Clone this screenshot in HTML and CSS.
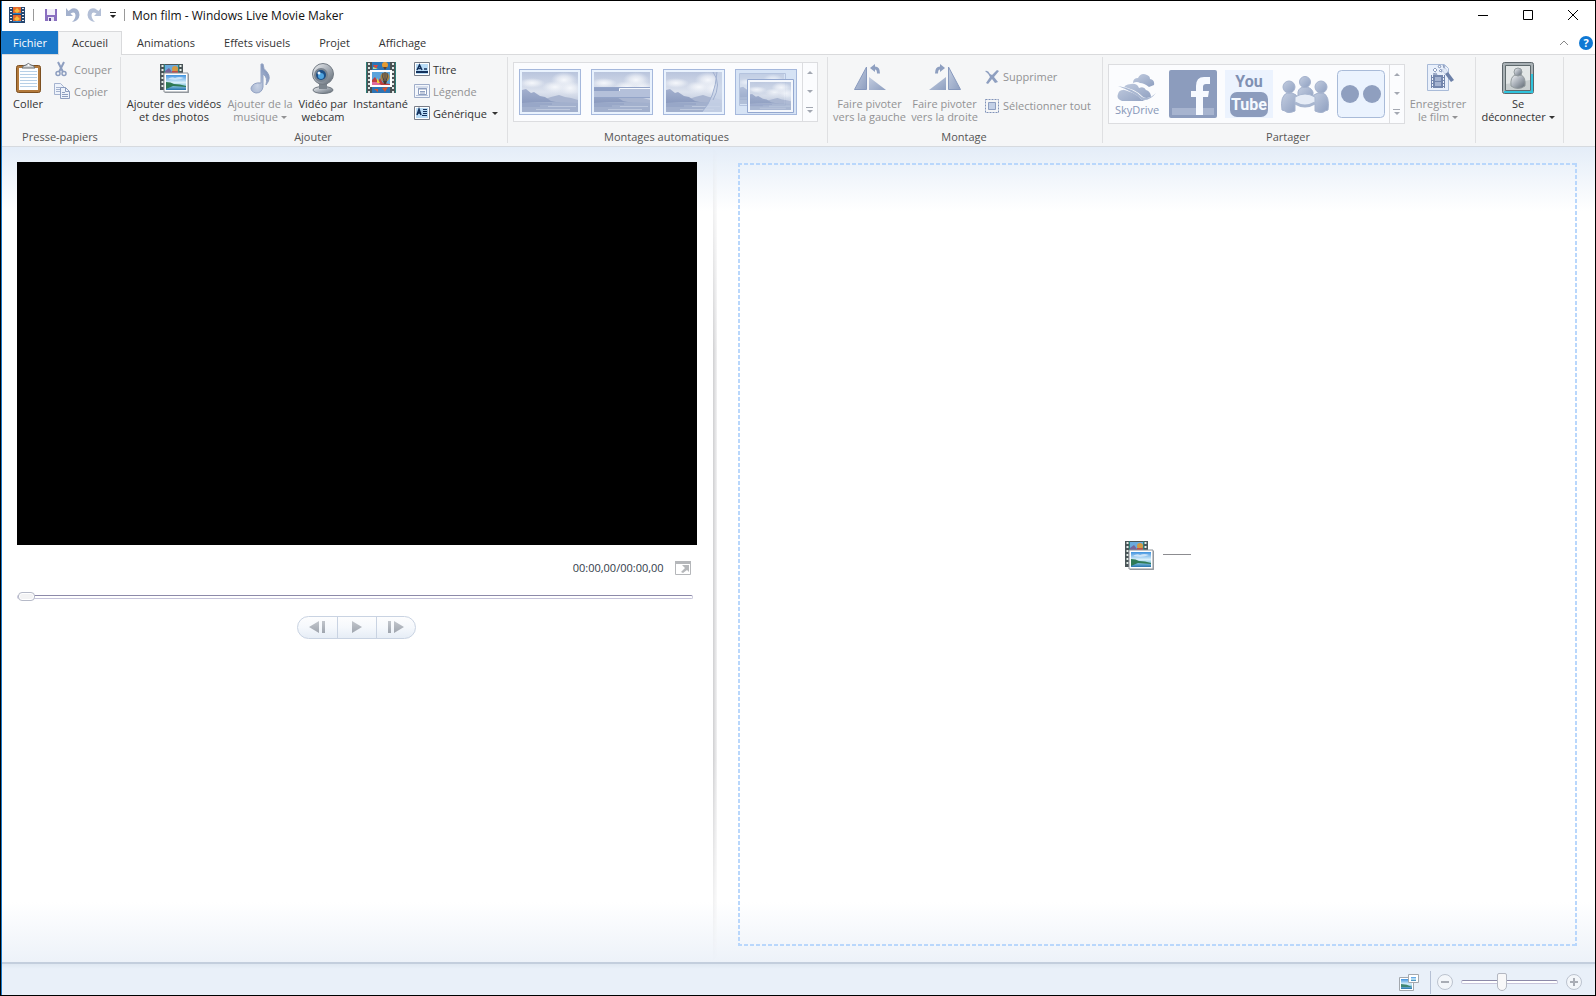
FILE: index.html
```html
<!DOCTYPE html>
<html lang="fr">
<head>
    <meta charset="UTF-8">
    <meta name="viewport" content="width=device-width, initial-scale=1.0">
    <title>Mon film - Windows Live Movie Maker</title>
    <link rel="stylesheet" href="styles.css">
</head>
<body>

<!-- Shared drawings -->
<svg class="defs" width="0" height="0" aria-hidden="true">
    <defs>
        <linearGradient id="sky" x1="0" y1="0" x2="0" y2="1">
            <stop offset="0" stop-color="#3f93e0"/>
            <stop offset="0.5" stop-color="#d8effa"/>
            <stop offset="0.7" stop-color="#8cc9e0"/>
            <stop offset="1" stop-color="#2673ae"/>
        </linearGradient>
        <linearGradient id="pale" x1="0" y1="0" x2="0" y2="1">
            <stop offset="0" stop-color="#b9c5dd"/>
            <stop offset="0.5" stop-color="#dde3ee"/>
            <stop offset="1" stop-color="#a3b1cd"/>
        </linearGradient>
        <radialGradient id="cloud">
            <stop offset="0" stop-color="#f6f8fc"/>
            <stop offset="0.5" stop-color="#eef1f7" stop-opacity="0.7"/>
            <stop offset="1" stop-color="#e6ebf4" stop-opacity="0"/>
        </radialGradient>
        <linearGradient id="hill" x1="0" y1="0" x2="0" y2="1">
            <stop offset="0" stop-color="#a3b0ce"/>
            <stop offset="1" stop-color="#8797bc"/>
        </linearGradient>
        <linearGradient id="slate" x1="0" y1="0" x2="1" y2="1">
            <stop offset="0" stop-color="#c3cde0"/>
            <stop offset="1" stop-color="#8e9fc0"/>
        </linearGradient>
        <linearGradient id="steel" x1="0" y1="0" x2="1" y2="1">
            <stop offset="0" stop-color="#f4f6f8"/>
            <stop offset="0.5" stop-color="#a6adb6"/>
            <stop offset="1" stop-color="#5c6670"/>
        </linearGradient>
        <linearGradient id="play" x1="0" y1="0" x2="0" y2="1">
            <stop offset="0" stop-color="#c2c6cc"/>
            <stop offset="1" stop-color="#9fa5ae"/>
        </linearGradient>
        <symbol id="media" viewBox="0 0 32 32">
            <path d="M2 2h23v26H2z" fill="#4a5558"/>
            <path d="M7 3h13v10H7z" fill="#6aaadd"/>
            <path d="M7 9l4-3 3 4 6-2v5H7z" fill="#76659a"/>
            <circle cx="17" cy="7" r="3" fill="#d59a42"/>
            <path d="M14 9h6v2h-6z" fill="#c04e4a"/>
            <path d="M4.500 3v24M22.500 3v9" stroke="#e6efe9" stroke-width="2" stroke-dasharray="2 2"/>
            <path d="M6.500 2v26M20.500 2v10" stroke="#2d7f78" stroke-width="1"/>
            <path d="M7 12h24v19H7z" fill="#9aa0a6"/>
            <path d="M6 11h24v19H6z" fill="#fff" stroke="#8b9096"/>
            <path d="M8 13h20v15H8z" fill="url(#sky)"/>
            <path d="M10 17q4-3 7-1 4-2 9 0-6 3-16 1z" fill="#fff" opacity=".6"/>
            <path d="M8 20q5 0 8 2 6 0 12 2v1l-13-1-7 3z" fill="#2f7a55"/>
        </symbol>
        <symbol id="landscape" viewBox="0 0 56 40">
            <path d="M0 0h56v40H0z" fill="url(#pale)"/>
            <ellipse cx="42" cy="8" rx="13" ry="8" fill="url(#cloud)"/>
            <ellipse cx="33" cy="15" rx="13" ry="6" fill="url(#cloud)"/>
            <ellipse cx="48" cy="16" rx="11" ry="7" fill="url(#cloud)"/>
            <ellipse cx="10" cy="11" rx="13" ry="5" fill="url(#cloud)"/>
            <path d="M20 28l9-3 8-2 6 2 6 1 7 2v5H20z" fill="#a9b5d0"/>
            <path d="M0 18l4-1 5 4 3-1 6 4 5 1 6 4 10 2v2H0z" fill="url(#hill)"/>
            <path d="M0 31q28-2 56 0v9H0z" fill="#a2b0cd"/>
            <path d="M0 32h30M0 34h18" stroke="#8e9ec2"/>
            <path d="M26 34.500h28M14 37.500h34" stroke="#bdc8dd"/>
        </symbol>
    </defs>
</svg>

<div class="window">

<header class="titlebar">
    <div class="quick">
        <svg class="app" width="16" height="16" viewBox="0 0 16 16">
            <path d="M0 0h16v16H0z" fill="#26466f"/>
            <path d="M4 0h8v7H4z" fill="#e3672c"/>
            <path d="M4 8h8v7H4z" fill="#e3672c"/>
            <path d="M5 4l3-3 3 3-3 2zM5 12l3-3 3 3-3 2z" fill="#f6b93b"/>
            <path d="M4 6h8v1H4zM4 14h8v1H4z" fill="#2b7fc6"/>
            <path d="M2 1v14M14 1v14" stroke="#e8eef5" stroke-width="2" stroke-dasharray="1 2"/>
        </svg>
        <span class="bar"></span>
        <button aria-label="Enregistrer"><svg width="14" height="14" viewBox="0 0 14 14">
            <path d="M1 1h12v12H1z" fill="#8a6fc0"/>
            <path d="M3 1h8v6H3z" fill="#f3f0fa"/>
            <path d="M4 9h6v4H4z" fill="#e9e4f5"/>
            <path d="M5 10h2v3H5z" fill="#5d4795"/>
        </svg></button>
        <button aria-label="Annuler"><svg width="15" height="16" viewBox="0 0 15 16">
            <path d="M1 1v8h7L5.500 6.500Q10 4 10.500 8q0 4-3.500 7 7-1 7.500-7Q14 0 7 1.500L3.500 4z" fill="#a3b1cd"/>
        </svg></button>
        <button aria-label="Rétablir"><svg width="15" height="16" viewBox="0 0 15 16">
            <path d="M14 1v8H7l2.500-2.500Q5 4 4.500 8q0 4 3.500 7-7-1-7.500-7Q1 0 8 1.500L11.500 4z" fill="#b3bfd6"/>
        </svg></button>
        <button aria-label="Personnaliser"><svg width="8" height="7" viewBox="0 0 8 7">
            <path d="M1 0h6v1H1zM1 3h6L4 6z" fill="#222"/>
        </svg></button>
        <span class="bar"></span>
    </div>
    <h1>Mon film - Windows Live Movie Maker</h1>
    <div class="caption">
        <button aria-label="Réduire"><svg width="12" height="12" viewBox="0 0 12 12"><path d="M1 6.500h10" stroke="#000"/></svg></button>
        <button aria-label="Agrandir"><svg width="12" height="12" viewBox="0 0 12 12"><path d="M1.500 1.500h9v9h-9z" fill="none" stroke="#000"/></svg></button>
        <button aria-label="Fermer"><svg width="12" height="12" viewBox="0 0 12 12"><path d="M1 1l10 10M11 1L1 11" stroke="#000"/></svg></button>
    </div>
</header>

<nav class="tabs">
    <button class="file">Fichier</button>
    <button class="active">Accueil</button>
    <button>Animations</button>
    <button>Effets visuels</button>
    <button>Projet</button>
    <button>Affichage</button>
    <div class="help">
        <button aria-label="Réduire le ruban"><svg width="10" height="6" viewBox="0 0 10 6"><path d="M1 5l4-4 4 4" fill="none" stroke="#888"/></svg></button>
        <button class="question" aria-label="Aide">?</button>
    </div>
</nav>

<div class="ribbon">
    <section class="group clipboard">
        <div class="tools">
            <button class="big">
                <svg width="32" height="32" viewBox="0 0 32 32">
                    <rect x="4.500" y="3.500" width="24" height="27" rx="2" fill="#b37a3c" stroke="#7d5020"/>
                    <path d="M7 6h19v22H7z" fill="#fdfeff"/>
                    <path d="M8 9.500h17M8 12.500h17M8 15.500h17M8 18.500h17M8 21.500h17M8 24.500h17" stroke="#b6cfe6"/>
                    <path d="M10 6q1-3 4-3 2-3 5 0 3 0 4 3z" fill="#d5d8da" stroke="#64696d"/>
                    <circle cx="16.500" cy="3" r="1" fill="#fff"/>
                </svg>
                <span>Coller</span>
            </button>
            <div class="stack">
                <button class="small" disabled>
                    <svg width="14" height="16" viewBox="0 0 14 16">
                        <path d="M4 1l5 10M10 1L5 11" stroke="#8e9fc0" stroke-width="2"/>
                        <circle cx="4" cy="12.500" r="2" fill="none" stroke="#8e9fc0" stroke-width="1.500"/>
                        <circle cx="10" cy="12.500" r="2" fill="none" stroke="#8e9fc0" stroke-width="1.500"/>
                    </svg>
                    Couper
                </button>
                <button class="small" disabled>
                    <svg width="16" height="16" viewBox="0 0 16 16">
                        <path d="M.5.500h6l3 3v8h-9z" fill="#eef3fb" stroke="#a5b3cf"/>
                        <path d="M2 4.500h4M2 6.500h4M2 8.500h4" stroke="#a5b3cf"/>
                        <path d="M6.500 4.500h5l4 4v7h-9z" fill="#eef3fb" stroke="#8e9fc0"/>
                        <path d="M11.500 4.500v4h4M8 9.500h3M8 11.500h6M8 13.500h6" fill="none" stroke="#8e9fc0"/>
                    </svg>
                    Copier
                </button>
            </div>
        </div>
        <h2>Presse-papiers</h2>
    </section>

    <section class="group add">
        <div class="tools">
            <button class="big">
                <svg width="32" height="32"><use href="#media"/></svg>
                <span>Ajouter des vidéos<br>et des photos</span>
            </button>
            <button class="big" disabled>
                <svg width="32" height="32" viewBox="0 0 32 32">
                    <defs>
                        <radialGradient id="note" cx=".35" cy=".75" r=".7">
                            <stop offset="0" stop-color="#c9d3e5"/>
                            <stop offset="1" stop-color="#8799bd"/>
                        </radialGradient>
                    </defs>
                    <path d="M17 2h2q0 5 4 8 5 6-1 13 2-8-3-11v13q-1 6-7 6-5-1-5-5 2-6 10-5z" fill="url(#note)" stroke="#93a3c3"/>
                </svg>
                <span>Ajouter de la<br>musique <i class="arrow"></i></span>
            </button>
            <button class="big">
                <svg width="32" height="32" viewBox="0 0 32 32">
                    <ellipse cx="16" cy="28" rx="10" ry="3.500" fill="url(#steel)" stroke="#6e767f"/>
                    <path d="M12 20h8v7h-8z" fill="#7c858e"/>
                    <circle cx="16" cy="12" r="10.500" fill="url(#steel)" stroke="#737b84"/>
                    <circle cx="14" cy="13" r="7" fill="#7b8590"/>
                    <circle cx="14" cy="13" r="5" fill="#1d4f86"/>
                    <circle cx="14" cy="14" r="3" fill="#4fa4e0"/>
                    <circle cx="12" cy="11" r="1.500" fill="#e8f4ff"/>
                </svg>
                <span>Vidéo par<br>webcam</span>
            </button>
            <button class="big">
                <svg width="32" height="32" viewBox="0 0 32 32">
                    <path d="M1 0h30v31H1z" fill="#4b5254"/>
                    <path d="M7 0h18v31H7z" fill="#2c74b5"/>
                    <path d="M4 1v30M28 1v30" stroke="#dfe6e4" stroke-width="2" stroke-dasharray="2 2"/>
                    <path d="M1.500 0v31M30.500 0v31" stroke="#2d7f78"/>
                    <circle cx="20" cy="3" r="3" fill="#e39a33"/>
                    <path d="M18 5h4l-2 3z" fill="#5a3f2c"/>
                    <path d="M8 3h5l-2 4z" fill="#d9493d"/>
                    <path d="M8 5l5 2h-5z" fill="#bfe08a"/>
                    <path d="M17 26l6-1-3 5zM9 27h4v3z" fill="#d4532f"/>
                    <path d="M6 9h20v15H6z" fill="#5aa4db" stroke="#fff" stroke-width="2"/>
                    <path d="M7 18l3-3 3 5 2-4 3 5 7 1v1H7z" fill="#bd3f3d"/>
                    <path d="M7 20h6l3 3H7z" fill="#e06a9a"/>
                    <path d="M12 16l3 5h-3z" fill="#f0cf3c"/>
                    <circle cx="20" cy="15" r="4.500" fill="#a9843c"/>
                    <path d="M18 11q-1 4 1 8M22 11q1 4-1 8M20 10v10" stroke="#3a3e54" fill="none"/>
                    <path d="M18 19h4l-1 3h-2z" fill="#4b3929"/>
                </svg>
                <span>Instantané</span>
            </button>
            <div class="stack">
                <button class="small">
                    <svg width="16" height="14" viewBox="0 0 16 14">
                        <path d="M.5.500h15v13H.5z" fill="#fff" stroke="#777d88"/>
                        <path d="M2 2h12v10H2z" fill="#b9dcf7"/>
                        <path d="M3 8l2.500-5L8 8M4 6.500h3M10 7h3" fill="none" stroke="#13315c" stroke-width="1.500"/>
                        <path d="M2 9h12v2H2z" fill="#13315c"/>
                    </svg>
                    Titre
                </button>
                <button class="small" disabled>
                    <svg width="16" height="14" viewBox="0 0 16 14">
                        <path d="M.5.500h15v13H.5z" fill="#f4f7fc" stroke="#9fadc9"/>
                        <path d="M2 3h12M2 11.500h12" stroke="#b5c2da"/>
                        <path d="M4.500 4.500h8v6h-8z" fill="#fff" stroke="#8e9fc0"/>
                        <path d="M4 5h9M6 7.500h5M6 9h5" stroke="#8e9fc0"/>
                    </svg>
                    Légende
                </button>
                <button class="small">
                    <svg width="16" height="14" viewBox="0 0 16 14">
                        <path d="M.5.500h15v13H.5z" fill="#fff" stroke="#777d88"/>
                        <path d="M2 2h12v10H2z" fill="#b9dcf7"/>
                        <path d="M3 9l2-6 2 6M4 7h2" fill="none" stroke="#13315c" stroke-width="1.500"/>
                        <path d="M9 3.500h4M9 5.500h4M9 7.500h4M8 9.500h5" stroke="#13315c"/>
                    </svg>
                    Générique <i class="arrow"></i>
                </button>
            </div>
        </div>
        <h2>Ajouter</h2>
    </section>

    <section class="group themes">
        <div class="gallery">
            <div class="items">
                <button class="thumb" aria-label="Aucun thème"><svg width="56" height="40"><use href="#landscape"/></svg></button>
                <button class="thumb" aria-label="Contemporain"><svg width="56" height="40" viewBox="0 0 56 40">
                    <use href="#landscape"/>
                    <path d="M0 15h56v10H0z" fill="#b4c0da"/>
                    <path d="M0 15h25v4H0z" fill="#8fa0c5"/>
                    <path d="M25.500 19V16.500H56" fill="none" stroke="#f5f8fd"/>
                    <path d="M0 15.500h56M0 25.500h56" stroke="#93a4c8"/>
                </svg></button>
                <button class="thumb" aria-label="Cinématique"><svg width="56" height="40" viewBox="0 0 56 40">
                    <use href="#landscape"/>
                    <path d="M51 0q-2 26-15 40h20V0z" fill="#c9d4e8" opacity=".8"/>
                    <path d="M51 0q-2 26-15 40M47 0q9 12 0 28" fill="none" stroke="#a0b0d0"/>
                </svg></button>
                <button class="thumb" aria-label="Fondu"><svg width="60" height="44" viewBox="0 0 60 44">
                    <path d="M0 0h60v44H0z" fill="#d6e3f5"/>
                    <svg x="4" y="4" width="44" height="30" viewBox="0 0 56 40" preserveAspectRatio="none" opacity=".7"><use href="#landscape"/></svg>
                    <path d="M3.500 3.500h46v32h-46z" fill="none" stroke="#b4c3de"/>
                    <svg x="13" y="12" width="43" height="28" viewBox="0 0 56 40" preserveAspectRatio="none" opacity=".85"><use href="#landscape"/></svg>
                    <path d="M13 11h43v30H13z" fill="none" stroke="#f5f8fd" stroke-width="2"/>
                    <path d="M11.500 9.500h46v33h-46z" fill="none" stroke="#94a8d0"/>
                </svg></button>
            </div>
            <div class="scroll">
                <button aria-label="Haut"><i class="up"></i></button>
                <button aria-label="Bas"><i class="arrow"></i></button>
                <button aria-label="Plus"><i class="arrow more"></i></button>
            </div>
        </div>
        <h2>Montages automatiques</h2>
    </section>

    <section class="group edit">
        <div class="tools">
            <button class="big" disabled>
                <svg width="32" height="32" viewBox="0 0 32 32">
                    <path d="M12.500 5v22.500H.5z" fill="url(#slate)" stroke="#8799bd"/>
                    <path d="M15 15v13h17z" fill="url(#slate)"/>
                    <path d="M16 6l5-4v2.500q5 0 5 7h-3q0-4-2-4V10z" fill="#8e9fc0"/>
                </svg>
                <span>Faire pivoter<br>vers la gauche</span>
            </button>
            <button class="big" disabled>
                <svg width="32" height="32" viewBox="0 0 32 32">
                    <path d="M19.500 5v22.500h12z" fill="url(#slate)" stroke="#8799bd"/>
                    <path d="M17 15v13H0z" fill="url(#slate)"/>
                    <path d="M16 6l-5-4v2.500q-5 0-5 7h3q0-4 2-4V10z" fill="#8e9fc0"/>
                </svg>
                <span>Faire pivoter<br>vers la droite</span>
            </button>
            <div class="stack tall">
                <button class="small" disabled>
                    <svg width="16" height="16" viewBox="0 0 16 16">
                        <path d="M1 2q3-1 5 3l2 1 5-5 2 1-5 6 4 5-3 1-3-4-4 5-2-1 4-6q-2-4-5-6z" fill="#8e9fc0"/>
                    </svg>
                    Supprimer
                </button>
                <button class="small" disabled>
                    <svg width="16" height="16" viewBox="0 0 16 16">
                        <path d="M1.500 1.500h13v13h-13z" fill="none" stroke="#8093b8" stroke-dasharray="2 1"/>
                        <path d="M4.500 4.500h7v7h-7z" fill="#c3d0e6" stroke="#8e9fc0"/>
                    </svg>
                    Sélectionner tout
                </button>
            </div>
        </div>
        <h2>Montage</h2>
    </section>

    <section class="group share">
        <div class="tools">
            <div class="gallery">
                <div class="items">
                    <button class="site sky" aria-label="SkyDrive">
                        <svg width="40" height="30" viewBox="0 0 40 30">
                            <path d="M16 10q0-5 5-5 3-6 9-3 3 1 3 4 5 1 4 6l-5 2q-5-4-9-4-3-2-7 0z" fill="url(#slate)"/>
                            <path d="M5 28q-6-2-4-7 1-4 5-4 1-6 8-6 6-1 8 4 5-2 7 2 4 1 5 6-1 5-6 5z" fill="url(#slate)"/>
                            <path d="M1 14q17 3 24 11 6 4 13-2" fill="none" stroke="#fbfcfe" stroke-width="3"/>
                            <path d="M1 13q17 3 24 11 7 3 14-4-6 8-14 7-8-8-24-14z" fill="#a9b7d1"/>
                        </svg>
                        <span>SkyDrive</span>
                    </button>
                    <button class="site" aria-label="Facebook"><svg width="48" height="48" viewBox="0 0 48 48">
                        <rect width="48" height="48" rx="2" fill="#8c9cbd"/>
                        <path d="M3 38h42v7H3z" fill="#a7b4cf"/>
                        <path d="M27 45V27h-5v-6h5v-5q0-9 8-9h6v7h-4q-3 0-3 3v4h6l-1 6h-5v18z" fill="#f7faff"/>
                    </svg></button>
                    <button class="site youtube"><b>You</b><em>Tube</em></button>
                    <button class="site" aria-label="Windows Live Groupes"><svg width="48" height="48" viewBox="0 0 48 48">
                        <g fill="url(#slate)" stroke="#a4b2cd">
                            <path d="M17 32V22q1-5 7-5t8 5v10z"/>
                            <circle cx="24" cy="12" r="5.500"/>
                            <path d="M1 40q-2-14 5-17h5q5 1 6 6v3l-3 2v7q-7 3-10 0z"/>
                            <circle cx="8" cy="17" r="6"/>
                            <path d="M47 40q2-14-5-17h-5q-5 1-6 6v3l3 2v7q7 3 10 0z"/>
                            <circle cx="40" cy="17" r="6"/>
                        </g>
                        <path d="M14 27q10-6 20 0v6q-10 6-20 0z" fill="#e6ecf6" stroke="#a9b7d0"/>
                        <path d="M14 33q10 6 20 0" fill="none" stroke="#a9b7d0" stroke-width="3"/>
                    </svg></button>
                    <button class="site" aria-label="Flickr"><svg width="48" height="48" viewBox="0 0 48 48">
                        <rect x=".5" y=".5" width="47" height="47" rx="4" fill="#ebf3fe" stroke="#a9bbd8"/>
                        <circle cx="13" cy="24" r="9" fill="#8f9fbf"/>
                        <circle cx="35" cy="24" r="9" fill="#8f9fbf"/>
                    </svg></button>
                </div>
                <div class="scroll">
                    <button aria-label="Haut"><i class="up"></i></button>
                    <button aria-label="Bas"><i class="arrow"></i></button>
                    <button aria-label="Plus"><i class="arrow more"></i></button>
                </div>
            </div>
            <button class="big" disabled>
                <svg width="32" height="32" viewBox="0 0 32 32">
                    <path d="M5.500 2.500h17l4 4v22h-21z" fill="#e9f0fb" stroke="#a9bbd8"/>
                    <path d="M9 13h14v13H9z" fill="#7386ad"/>
                    <path d="M10.500 13v13M21.500 13v13" stroke="#eef3fb" stroke-dasharray="2 1"/>
                    <path d="M13 15h6v4h-6zM13 20h6v4h-6z" fill="#a3b2d0"/>
                    <path d="M20 8l3-2 9 12-3 2z" fill="#6c80a8"/>
                    <path d="M20 8l3-2 3 4-3 2z" fill="#dfe8f6"/>
                    <path d="M11 8l2-2 2 2-2 2zM16 4l2-1 1 2-2 1zM17 9l2-2 1 3zM11 12l3-1 1 2zM21 3l2 1-1 2z" fill="#fff" stroke="#8e9fc0"/>
                </svg>
                <span>Enregistrer<br>le film <i class="arrow"></i></span>
            </button>
        </div>
        <h2>Partager</h2>
    </section>

    <section class="group account">
        <div class="tools">
            <button class="big">
                <svg width="32" height="32" viewBox="0 0 32 32">
                    <rect x=".5" y=".5" width="31" height="31" rx="2" fill="#a9b1b5" stroke="#5d666b"/>
                    <path d="M2 30h28V12" fill="none" stroke="#2fc3dc" stroke-width="2"/>
                    <path d="M3.500 3.500h25v25h-25z" fill="#c9cfd0" stroke="#5f6a6d"/>
                    <path d="M4 4h24v14L4 22z" fill="#e3e7e7"/>
                    <path d="M9 24q-1-9 4-11h6q5 2 4 11-7 5-14 0z" fill="url(#steel)" stroke="#949c9f"/>
                    <circle cx="16" cy="10" r="4" fill="url(#steel)" stroke="#949c9f"/>
                </svg>
                <span>Se<br>déconnecter <i class="arrow"></i></span>
            </button>
        </div>
    </section>
</div>

<main>
    <section class="preview">
        <div class="video"></div>
        <div class="time">
            <span>00:00,00/00:00,00</span>
            <button aria-label="Plein écran"><svg width="16" height="14" viewBox="0 0 16 14">
                <path d="M.5.500h15v13H.5z" fill="#fff" stroke="#b5b7ba"/>
                <path d="M0 0h16v3H0z" fill="#b5b7ba"/>
                <path d="M7 4h7v7l-2-2-4 3-2-1 4-4z" fill="#b5b7ba"/>
            </svg></button>
        </div>
        <input class="seek" type="range" min="0" max="100" value="0" aria-label="Position">
        <div class="controls">
            <button aria-label="Image précédente"><svg width="16" height="12" viewBox="0 0 16 12"><path d="M10 0v12L0 6zM13 0h3v12h-3z" fill="url(#play)"/></svg></button>
            <button aria-label="Lecture"><svg width="10" height="12" viewBox="0 0 10 12"><path d="M0 0l10 6-10 6z" fill="url(#play)"/></svg></button>
            <button aria-label="Image suivante"><svg width="16" height="12" viewBox="0 0 16 12"><path d="M6 0v12l10-6zM0 0h3v12H0z" fill="url(#play)"/></svg></button>
        </div>
    </section>
    <div class="splitter"></div>
    <section class="storyboard">
        <div class="dropzone">
            <svg width="32" height="32"><use href="#media"/></svg>
            <hr>
        </div>
    </section>
</main>

<footer>
    <button aria-label="Taille des miniatures"><svg width="20" height="17" viewBox="0 0 20 17">
        <path d="M.5 3.500h14v13H.5z" fill="#fff" stroke="#a3a8ae"/>
        <path d="M2 5h11v10H2z" fill="url(#sky)"/>
        <path d="M2 10q6 0 11 3H2z" fill="#3f8672"/>
        <path d="M9.500.500h10v8h-10z" fill="#fff" stroke="#a3a8ae"/>
        <path d="M12 3h5v4h-5z" fill="url(#sky)"/>
    </svg></button>
    <span class="bar"></span>
    <button class="round" aria-label="Zoom arrière"><svg width="8" height="8" viewBox="0 0 8 8"><path d="M0 3h8v2H0z" fill="#a9adb5"/></svg></button>
    <input class="zoom" type="range" min="0" max="100" value="41" aria-label="Zoom">
    <button class="round" aria-label="Zoom avant"><svg width="8" height="8" viewBox="0 0 8 8"><path d="M0 3h8v2H0zM3 0h2v8H3z" fill="#a9adb5"/></svg></button>
</footer>

</div>

</body>
</html>
```

FILE: styles.css
```css
* {
    box-sizing: border-box;
}

body {
    margin: 0;
    font-family: "Open Sans", "Noto Sans", sans-serif;
    font-size: 11px;
    line-height: 13px;
    color: #333;
}

button {
    display: flex;
    align-items: center;
    justify-content: center;
    padding: 0;
    border: none;
    background: none;
    font: inherit;
    color: inherit;
    white-space: nowrap;
}

button:disabled {
    color: #929294;
}

svg {
    display: block;
    flex: none;
}

.defs {
    position: absolute;
}

.window {
    display: flex;
    flex-direction: column;
    height: 100vh;
    border: 1px solid #000;
    box-shadow: inset 1px 0 #1979ca;
    padding-left: 1px;
}

/* Title bar */
.titlebar {
    display: flex;
    align-items: center;
    height: 30px;
    padding: 0 0 2px 7px;
}

.quick {
    display: flex;
    align-items: center;
    gap: 7px;
}

.quick .bar {
    width: 1px;
    height: 12px;
    background-color: #999;
}

.quick .app + .bar {
    margin: 0 3px 0 1px;
}

h1 {
    margin: 0 0 0 7px;
    font-size: 12px;
    font-weight: normal;
    color: #111;
}

.caption {
    display: flex;
    margin-left: auto;
}

.caption button {
    width: 45px;
    height: 28px;
}

/* Tabs */
.tabs {
    display: flex;
    height: 24px;
    border-bottom: 1px solid #d9dadc;
}

.tabs > button {
    height: 23px;
    padding: 0 15px;
    margin-left: -1px;
}

.tabs .file {
    width: 56px;
    margin-left: 0;
    background-color: #1979ca;
    color: #fff;
}

.tabs .active {
    width: 64px;
    height: 24px;
    margin: 0 1px 0 0;
    padding-bottom: 2px;
    background-color: #f5f6f7;
    border: 1px solid #d9dadc;
    border-bottom: none;
}

.help {
    display: flex;
    align-items: center;
    gap: 10px;
    margin-left: auto;
    padding-right: 2px;
}

.question {
    width: 14px;
    height: 14px;
    border-radius: 50%;
    background-color: #0f78d4;
    color: #fff;
    font-weight: bold;
}

/* Ribbon */
.ribbon {
    display: flex;
    height: 92px;
    background-color: #f5f6f7;
    border-bottom: 1px solid #d6dadf;
}

.group {
    display: flex;
    flex-direction: column;
    flex: none;
    margin: 2px 0 3px;
    border-right: 1px solid #dfe0e2;
}

.group h2 {
    margin: auto 0 0;
    padding-right: 2px;
    font-size: 11px;
    font-weight: normal;
    line-height: 13px;
    text-align: center;
    color: #555;
}

.tools {
    display: flex;
}

.clipboard {
    width: 119px;
}

.add {
    width: 387px;
}

.themes {
    width: 320px;
}

.edit {
    width: 275px;
}

.share {
    width: 373px;
}

.account {
    width: 88px;
}

.big {
    flex-direction: column;
    justify-content: flex-start;
    gap: 3px;
    padding-top: 5px;
}

.clipboard .big {
    width: 52px;
}

.add .big {
    width: 66px;
}

.add .big:nth-child(1) {
    width: 106px;
}

.add .big:nth-child(3) {
    width: 60px;
}

.add .big:nth-child(4) {
    width: 55px;
}

.edit .big {
    width: 75px;
}

.edit .tools {
    padding-left: 4px;
}

.share .big {
    width: 66px;
}

.account .big {
    width: 84px;
}

.stack {
    display: flex;
    flex-direction: column;
    padding-top: 1px;
}

.small {
    justify-content: flex-start;
    gap: 3px;
    height: 22px;
}

.clipboard .small {
    gap: 4px;
}

.clipboard .small:first-child {
    gap: 6px;
}

.add .stack {
    padding-left: 6px;
}

.edit .stack {
    padding-left: 2px;
}

.tall {
    padding-top: 5px;
}

.tall .small {
    height: 29px;
}

.arrow,
.up {
    display: inline-block;
    border: 3px solid transparent;
    border-top-color: currentColor;
    border-bottom-width: 0;
    vertical-align: 2px;
}

.up {
    border-top-width: 0;
    border-bottom: 3px solid;
}

.small .arrow {
    margin-left: 2px;
}

/* Galleries */
.gallery {
    display: flex;
    height: 60px;
    margin: 5px 0 0 5px;
    border: 1px solid #dcdde0;
    background-color: #fbfcfe;
}

.themes .gallery {
    width: 305px;
}

.share .gallery {
    width: 297px;
    margin-top: 7px;
}

.items {
    display: flex;
    flex: 1;
    align-items: center;
    gap: 10px;
    padding-left: 5px;
}

.share .items {
    gap: 8px;
    padding-left: 4px;
}

.thumb {
    width: 62px;
    height: 46px;
    border: 1px solid #a5b8dc;
    background-color: #e9f2fd;
}

.scroll {
    display: flex;
    flex-direction: column;
    width: 15px;
    border-left: 1px solid #dcdde0;
    color: #a3a8b2;
}

.scroll button {
    flex: 1;
}

.more {
    position: relative;
}

.more::before {
    content: "";
    position: absolute;
    top: -6px;
    left: -4px;
    width: 7px;
    height: 1px;
    background-color: #a3a8b2;
}

.site {
    flex-direction: column;
    width: 48px;
    height: 48px;
}

.sky {
    color: #8797b8;
}

.youtube {
    background-color: #ecf3fe;
    font-family: Roboto, "Liberation Sans", sans-serif;
    font-size: 16px;
    line-height: 20px;
    color: #8090b2;
}

.youtube em {
    width: 38px;
    height: 25px;
    border-radius: 7px;
    background-color: #8c9cbd;
    color: #f5f9ff;
    font-style: normal;
    font-weight: bold;
    line-height: 25px;
}

/* Content */
main {
    display: grid;
    grid-template-columns: 89fr 4px 110fr;
    flex: 1;
    min-height: 0;
    background: linear-gradient(#e4edf8, transparent 64px), linear-gradient(to top, #edf2f9, transparent 60px);
    border-bottom: 2px solid #c3cedd;
}

.preview {
    padding: 15px 16px 0 15px;
}

.video {
    aspect-ratio: 680 / 383;
    background-color: #000;
}

.time {
    display: flex;
    justify-content: flex-end;
    align-items: center;
    gap: 11px;
    height: 46px;
    padding-right: 6px;
}

.time span {
    color: #333c4a;
}

input[type="range"] {
    -webkit-appearance: none;
    appearance: none;
    display: block;
    background: none;
}

.seek {
    width: calc(100% - 4px);
    height: 12px;
    margin: 0;
}

.seek::-webkit-slider-runnable-track,
.zoom::-webkit-slider-runnable-track {
    height: 4px;
    border: 1px solid #c6c4da;
    border-top-color: #8d8aa9;
    border-radius: 2px;
    background-color: #fff;
}

.seek::-webkit-slider-thumb {
    -webkit-appearance: none;
    width: 17px;
    height: 9px;
    margin-top: -4px;
    border: 1px solid #b6bac8;
    border-radius: 4px;
    background-color: #f3f3f4;
    box-shadow: inset 0 0 0 1px #fff;
}

.controls {
    display: flex;
    width: 119px;
    height: 23px;
    margin: 13px auto 0;
    border: 1px solid #c9d3e2;
    border-radius: 12px;
    background: linear-gradient(#fdfdfe, #f5f8fc 50%, #e6edf6);
}

.controls button {
    flex: 1;
}

.controls button + button {
    border-left: 1px solid #c9d3e2;
}

.splitter {
    background: linear-gradient(to right, #cfcfd1, #f2f2f3);
    -webkit-mask: linear-gradient(transparent, #000 25%, #000 75%, transparent);
    mask: linear-gradient(transparent, #000 25%, #000 75%, transparent);
}

.storyboard {
    padding: 16px 18px 16px 21px;
}

/* dashes are 4px long with a 2px gap on every side */
.dropzone {
    display: flex;
    align-items: center;
    justify-content: center;
    gap: 8px;
    height: 100%;
    background:
        repeating-linear-gradient(to right, #b9d7fc 0 4px, transparent 4px 6px) top / 100% 2px no-repeat,
        repeating-linear-gradient(to right, #b9d7fc 0 4px, transparent 4px 6px) bottom / 100% 2px no-repeat,
        repeating-linear-gradient(#b9d7fc 0 4px, transparent 4px 6px) left / 2px 100% no-repeat,
        repeating-linear-gradient(#b9d7fc 0 4px, transparent 4px 6px) right / 2px 100% no-repeat;
}

.dropzone hr {
    width: 28px;
    margin: 0;
    border: none;
    border-top: 1px solid #8c8c90;
}

/* Status bar */
footer {
    display: flex;
    align-items: center;
    justify-content: flex-end;
    height: 31px;
    padding: 5px 13px 0 0;
    background: linear-gradient(#dfe8f2, #e9f0f9 5px);
}

footer .bar {
    width: 1px;
    height: 23px;
    margin: 0 6px 0 11px;
    background-color: #b5c0d4;
}

.round {
    width: 16px;
    height: 16px;
    border: 1px solid #bcc3cf;
    border-radius: 50%;
    background-color: #f3f6fa;
}

.zoom {
    width: 97px;
    height: 18px;
    margin: 0 8px;
}

.zoom::-webkit-slider-thumb {
    -webkit-appearance: none;
    width: 10px;
    height: 18px;
    margin-top: -8px;
    border: 1px solid #b4b8c2;
    border-radius: 2px 2px 5px 5px;
    background-color: #f8f8f9;
}
```
